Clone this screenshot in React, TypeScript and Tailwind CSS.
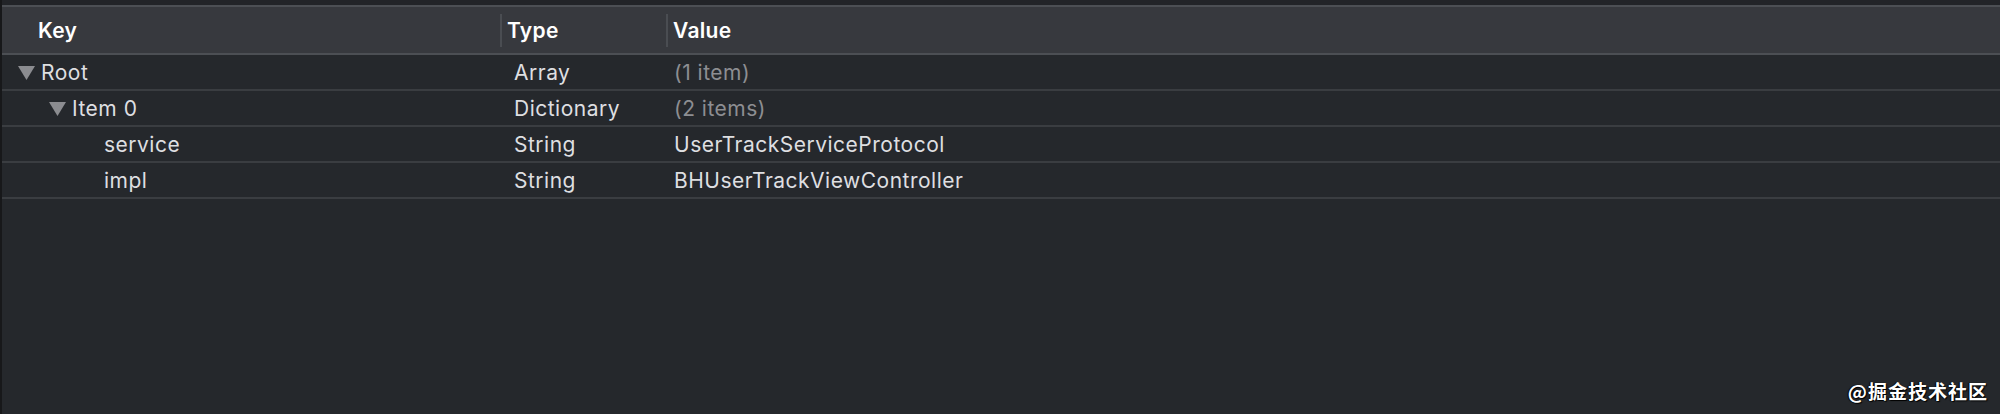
import React from "react";

type Row = { key: string; level: number; expand?: boolean; type: string; value: string; muted?: boolean };

const rows: Row[] = [
  { key: "Root", level: 0, expand: true, type: "Array", value: "(1 item)", muted: true },
  { key: "Item 0", level: 1, expand: true, type: "Dictionary", value: "(2 items)", muted: true },
  { key: "service", level: 2, type: "String", value: "UserTrackServiceProtocol" },
  { key: "impl", level: 2, type: "String", value: "BHUserTrackViewController" },
];

function Tri() {
  return (
    <svg width="17" height="14" viewBox="0 0 17 14" className="shrink-0">
      <polygon points="0,0 17,0 8.5,14" fill="#8b8c90" />
    </svg>
  );
}

export default function App() {
  return (
    <div
      className="relative w-[2000px] h-[414px] bg-[#25282c] flex border-l-2 border-[#17181a] overflow-hidden"
      style={{ fontFamily: '"Inter", "Liberation Sans", sans-serif' }}
    >
      <div className="flex flex-col w-full">
        <div className="h-[5px] bg-[#222428]" />
        <div className="h-[2px] bg-[#4c4f54]" />
        <div className="h-[46px] bg-[#37393e] flex items-center text-[21px] font-semibold text-white tracking-[0.3px]">
          <div className="w-[498px] pl-[36px] pt-[2px]">Key</div>
          <div className="w-[166px] flex items-center">
            <div className="w-[2px] h-[33px] bg-[#4a4d52]" />
            <div className="pl-[5px] pt-[2px]">Type</div>
          </div>
          <div className="flex items-center">
            <div className="w-[2px] h-[33px] bg-[#4a4d52]" />
            <div className="pl-[5px] pt-[2px]">Value</div>
          </div>
        </div>
        <div className="h-[2px] bg-[#4c4f54]" />
        {rows.map((r) => (
          <div key={r.key} className="h-[36px] border-b-2 border-[#3a3d41] pt-[2px] flex items-center text-[21px] tracking-[0.5px] text-[#dedfe1]">
            <div className="w-[498px] flex items-center">
              {r.expand ? (
                <div className="flex items-center" style={{ paddingLeft: 16 + r.level * 31 }}>
                  <Tri />
                  <span className="pl-[6px]">{r.key}</span>
                </div>
              ) : (
                <span className="pl-[102px]">{r.key}</span>
              )}
            </div>
            <div className="w-[166px] pl-[14px]">{r.type}</div>
            <div className={"pl-[8px] " + (r.muted ? "text-[#8d8e92]" : "")}>{r.value}</div>
          </div>
        ))}
        <div className="flex-1" />
      </div>
      <div
        className="absolute right-[12px] bottom-[9px] text-[19px] font-bold text-white tracking-[1px]"
        style={{ fontFamily: '"Noto Sans CJK SC", sans-serif', textShadow: "1px 1px 1px #000, -1px 0 1px #000" }}
      >
        @掘金技术社区
      </div>
    </div>
  );
}
